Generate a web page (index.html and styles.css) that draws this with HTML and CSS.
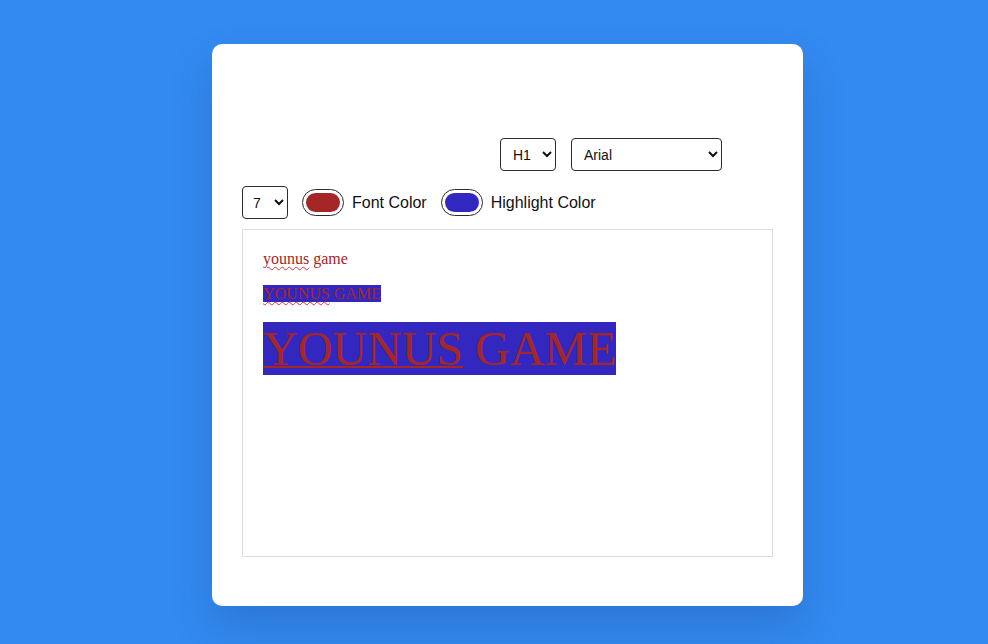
FILE: index.html
```html
<!DOCTYPE html>
<html>
<head>
<meta charset="utf-8">
<link rel="stylesheet" href="styles.css">
</head>
<body>
<div class="page">
  <div class="card">
    <div class="toolbar">
      <div class="row row-top">
        <select class="sel sel-h"><option>H1</option></select>
        <select class="sel sel-font"><option>Arial</option></select>
      </div>
      <div class="row row-bottom">
        <select class="sel sel-size"><option>7</option></select>
        <span class="swatch"><span class="swatch-fill red"></span></span>
        <span class="label">Font Color</span>
        <span class="swatch"><span class="swatch-fill blue"></span></span>
        <span class="label">Highlight Color</span>
      </div>
    </div>
    <div class="editor" contenteditable="true" spellcheck="false">
      <div class="line l1"><span class="spell">younus</span> game</div>
      <div class="line l2"><span class="hl"><span class="spell-u">YOUNUS</span> GAME</span></div>
      <div class="line l3"><span class="hl big"><u>YOUNUS</u> GAME</span></div>
    </div>
  </div>
</div>
</body>
</html>
```
FILE: styles.css
```css
html, body {
  margin: 0;
  padding: 0;
}
body {
  background: #338af0;
  font-family: "Liberation Sans", Arial, sans-serif;
  width: 988px;
  height: 644px;
  overflow: hidden;
}
.page {
  display: flex;
  justify-content: flex-start;
  padding: 44px 0 0 212px;
}
.card {
  width: 591px;
  height: 562px;
  box-sizing: border-box;
  background: #fff;
  border-radius: 10px;
  box-shadow: 0 20px 40px rgba(20, 50, 120, 0.22);
  padding: 94px 30px 0 30px;
}
.toolbar {
  display: flex;
  flex-direction: column;
  gap: 15px;
}
.row {
  display: flex;
  align-items: center;
}
.row-top {
  padding-left: 258px;
  gap: 15px;
}
.sel {
  height: 33px;
  box-sizing: border-box;
  border: 1px solid #2b2b2b;
  border-radius: 4px;
  background: #fff;
  font-family: "Liberation Sans", Arial, sans-serif;
  font-size: 14px;
  color: #111;
  padding: 0 4px 0 8px;
  margin: 0;
}
.sel-h { width: 56px; }
.sel-font { width: 151px; }
.sel-size { width: 46px; padding-left: 6px; }
.row-bottom {
  gap: 0;
}
.swatch {
  display: inline-flex;
  width: 42px;
  height: 27px;
  box-sizing: border-box;
  border: 1.5px solid #2b2b2b;
  border-radius: 14px;
  padding: 3px;
  background: #fff;
  margin-left: 14px;
}
.swatch-fill {
  flex: 1;
  border-radius: 11px;
}
.swatch-fill.red { background: #a52626; }
.swatch-fill.blue { background: #3228c0; }
.label {
  font-size: 16px;
  color: #111;
  margin-left: 8px;
}
.editor {
  margin-top: 10px;
  height: 328px;
  box-sizing: border-box;
  border: 1px solid #dddddd;
  padding: 20px;
  font-family: "Liberation Serif", "Times New Roman", serif;
  font-size: 16px;
  color: #a52626;
  outline: none;
}
.line {
  margin: 0 0 17px 0;
}
.line.l2 {
  margin-bottom: 18px;
}
.hl {
  background: #3228c0;
}
.big {
  font-size: 48px;
}
.spell, .spell-u {
  text-decoration: underline wavy #d33;
  text-decoration-thickness: 1px;
  text-underline-offset: 2px;
}
.big u {
  text-decoration-color: #a52626;
  text-decoration-thickness: 2px;
}
```
